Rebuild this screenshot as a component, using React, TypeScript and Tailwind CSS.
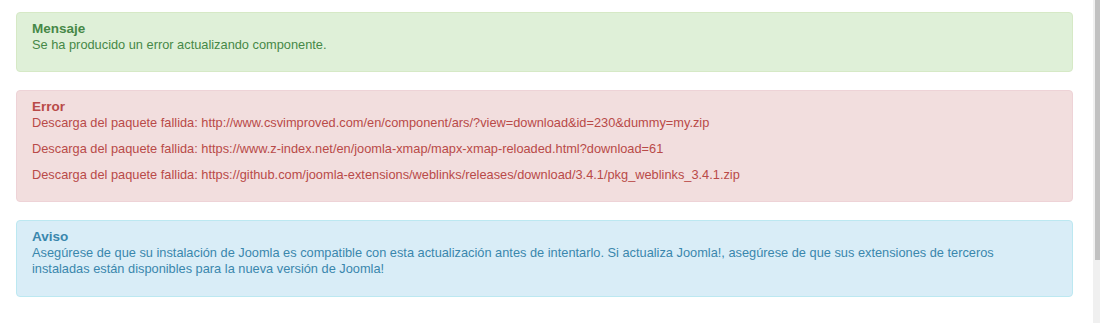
import type { ReactNode } from "react"

type Tone = "success" | "error" | "info"

const tones: Record<Tone, string> = {
  success: "bg-[#dff0d8] border-[#d6e9c6] text-[#468847]",
  error: "bg-[#f2dede] border-[#eed3d7] text-[#b94a48]",
  info: "bg-[#d9edf7] border-[#bce8f1] text-[#3a87ad]",
}

function Alert({ tone, title, children }: { tone: Tone; title: string; children: ReactNode }) {
  return (
    <div className={`mb-[18px] rounded-[4px] border pt-[8px] pb-[8px] pl-[15px] pr-[34px] ${tones[tone]}`}>
      <h4 className="text-[13.5px] font-bold leading-[16px]">{title}</h4>
      <div className="text-[12.8px] leading-[16px]">{children}</div>
    </div>
  )
}

const failed = [
  "http://www.csvimproved.com/en/component/ars/?view=download&id=230&dummy=my.zip",
  "https://www.z-index.net/en/joomla-xmap/mapx-xmap-reloaded.html?download=61",
  "https://github.com/joomla-extensions/weblinks/releases/download/3.4.1/pkg_weblinks_3.4.1.zip",
]

export default function App() {
  return (
    <div className="flex h-[323px] w-[1100px] overflow-hidden bg-white font-['Liberation_Sans',Arial,sans-serif]">
      <div className="flex-1 pl-[16px] pr-[20px] pt-[12px]">
        <Alert tone="success" title="Mensaje">
          <p className="mb-[10px]">Se ha producido un error actualizando componente.</p>
        </Alert>
        <Alert tone="error" title="Error">
          {failed.map((url) => (
            <p key={url} className="mb-[10px]">
              Descarga del paquete fallida: {url}
            </p>
          ))}
        </Alert>
        <Alert tone="info" title="Aviso">
          <p className="mb-[11px]">
            Asegúrese de que su instalación de Joomla es compatible con esta actualización antes de intentarlo. Si
            actualiza Joomla!, asegúrese de que sus extensiones de terceros instaladas están disponibles para la nueva
            versión de Joomla!
          </p>
        </Alert>
      </div>
      {/* scrollbar edge */}
      <div className="flex w-[7px] flex-col bg-[#f0f0f0]">
        <div className="ml-[2px] h-[260px] bg-[#c1c1c1]" />
      </div>
    </div>
  )
}
